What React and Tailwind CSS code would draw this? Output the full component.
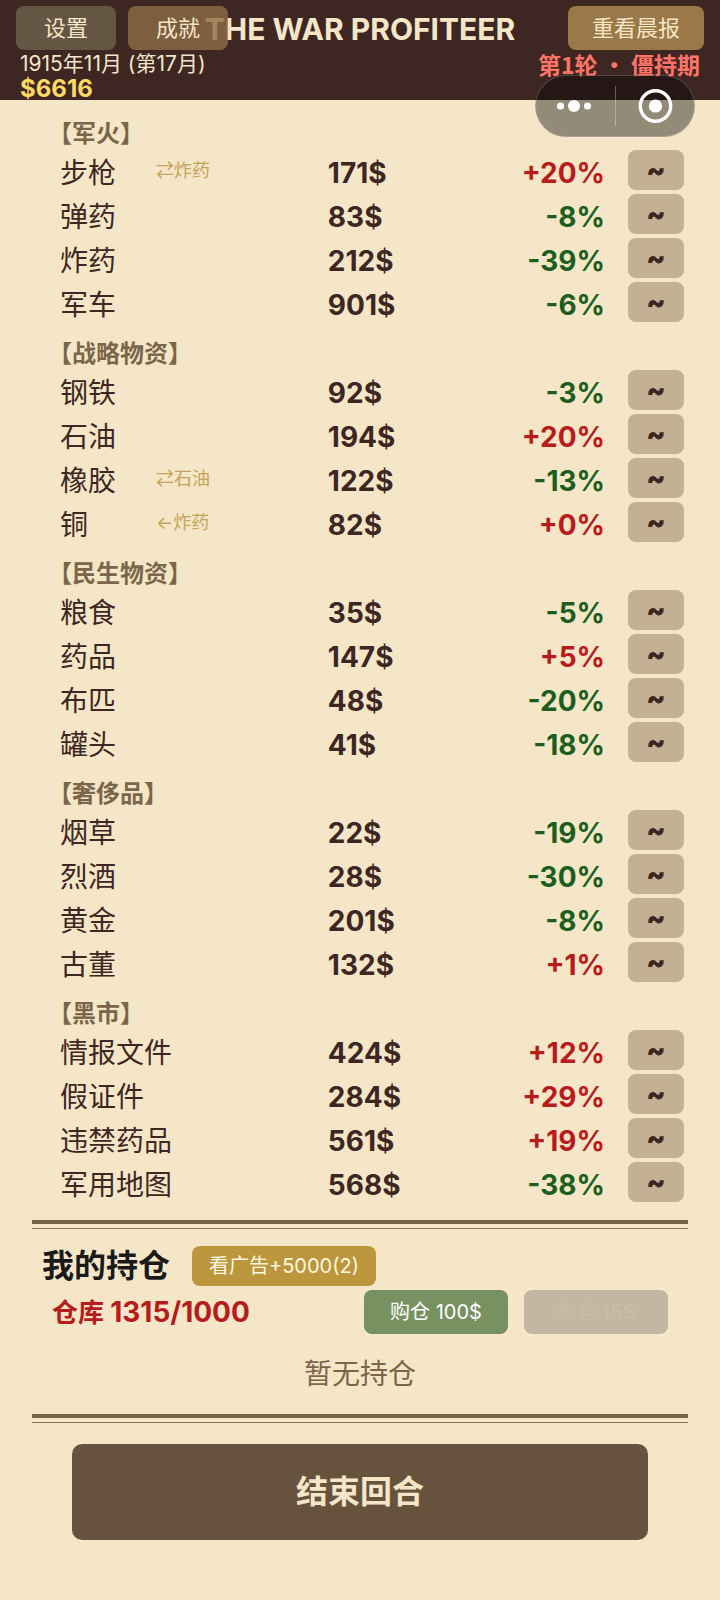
import { useState } from 'react';
import clsx from 'clsx';

const GROUPS = [
  {
    title: '军火',
    items: [
      { name: '步枪', link: '⇄炸药', price: 171, change: 20 },
      { name: '弹药', price: 83, change: -8 },
      { name: '炸药', price: 212, change: -39 },
      { name: '军车', price: 901, change: -6 },
    ],
  },
  {
    title: '战略物资',
    items: [
      { name: '钢铁', price: 92, change: -3 },
      { name: '石油', price: 194, change: 20 },
      { name: '橡胶', link: '⇄石油', price: 122, change: -13 },
      { name: '铜', link: '←炸药', price: 82, change: 0 },
    ],
  },
  {
    title: '民生物资',
    items: [
      { name: '粮食', price: 35, change: -5 },
      { name: '药品', price: 147, change: 5 },
      { name: '布匹', price: 48, change: -20 },
      { name: '罐头', price: 41, change: -18 },
    ],
  },
  {
    title: '奢侈品',
    items: [
      { name: '烟草', price: 22, change: -19 },
      { name: '烈酒', price: 28, change: -30 },
      { name: '黄金', price: 201, change: -8 },
      { name: '古董', price: 132, change: 1 },
    ],
  },
  {
    title: '黑市',
    items: [
      { name: '情报文件', price: 424, change: 12 },
      { name: '假证件', price: 284, change: 29 },
      { name: '违禁药品', price: 561, change: 19 },
      { name: '军用地图', price: 568, change: -38 },
    ],
  },
];

const HeaderButton = ({ className, children }) => (
  <button
    type="button"
    className={clsx('h-11 rounded-lg text-[22px] leading-7 text-[#f5e6c8]', className)}
  >
    {children}
  </button>
);

const Header = () => (
  <header className="relative bg-[#3e2723] pt-2">
    <h1 className="text-center text-[30px] leading-[42px] font-bold text-[#f5e6c8]">THE WAR PROFITEER</h1>
    <div className="flex justify-between px-5 leading-7">
      <p className="text-[21px] text-[#f5e6c8]">1915年11月 (第17月)</p>
      <p className="font-['Noto_Sans_CJK_SC',sans-serif] text-[23px] leading-7 font-bold text-[#ff7466]">
        第1轮 · 僵持期
      </p>
    </div>
    <p className="pl-5 text-2xl leading-[22px] font-bold text-[#ffd966]">$6616</p>

    <nav className="absolute inset-x-4 top-1.5 flex gap-3">
      <HeaderButton className="w-25 bg-[#6e634b]/80">设置</HeaderButton>
      <HeaderButton className="w-25 bg-[#8d6e47]/80">成就</HeaderButton>
      <HeaderButton className="ml-auto w-34 bg-[#9b7847]">重看晨报</HeaderButton>
    </nav>
  </header>
);

// Floating menu / close control supplied by the host app
const Capsule = () => (
  <div className="absolute top-[75px] right-[25px] flex h-[62px] w-40 items-center rounded-full border border-white/20 bg-black/40">
    <button type="button" aria-label="更多" className="flex h-full flex-1 items-center justify-center">
      <svg width="36" height="14" viewBox="0 0 36 14" fill="#fff">
        <circle cx="3.5" cy="7" r="3.6" />
        <circle cx="17" cy="7" r="6" />
        <circle cx="30.5" cy="7" r="3.6" />
      </svg>
    </button>
    <span className="h-10 w-px bg-white/30" />
    <button type="button" aria-label="关闭" className="flex h-full flex-1 items-center justify-center">
      <svg width="36" height="36" viewBox="0 0 36 36">
        <circle cx="18.5" cy="18" r="15.2" fill="none" stroke="#fff" strokeWidth="3.4" />
        <circle cx="18.5" cy="18" r="6.6" fill="#fff" />
      </svg>
    </button>
  </div>
);

const GoodsRow = ({ item }) => (
  <tr className="h-11">
    <th scope="row" className="p-0 pt-0.5 pl-3 text-left font-normal">
      <div className="flex items-center whitespace-nowrap">
        <span className="min-w-24 text-[28px] leading-10">{item.name}</span>
        {item.link && <span className="pb-1 text-lg leading-6 text-[#c4a35a]">{item.link}</span>}
      </div>
    </th>
    <td className="p-0 pt-0.5 text-[28px] leading-10 font-bold">{item.price}$</td>
    <td
      className={clsx(
        'p-0 pt-0.5 text-right text-[28px] leading-10 font-bold',
        item.change < 0 ? 'text-[#1b5e20]' : 'text-[#b71c1c]'
      )}
    >
      {item.change < 0 ? item.change : `+${item.change}`}%
    </td>
    <td className="p-0 pb-1">
      <button
        type="button"
        aria-label={`${item.name}走势`}
        className="ml-auto block h-10 w-14 rounded-lg bg-[#c4b194] text-[28px] leading-9 font-black"
      >
        ~
      </button>
    </td>
  </tr>
);

const Market = () => (
  <section className="pt-1.5 pr-9 pl-12">
    <table className="w-full table-fixed border-collapse text-[#3e2723]">
      <colgroup>
        <col className="w-[44%]" />
        <col className="w-[20%]" />
        <col />
        <col className="w-[79px]" />
      </colgroup>
      {GROUPS.map((group) => (
        <tbody key={group.title}>
          <tr className="h-11">
            <th
              scope="rowgroup"
              colSpan={4}
              className="p-0 pt-3 text-left text-2xl leading-8 font-bold text-[#7b664a]"
            >
              【{group.title}】
            </th>
          </tr>
          {group.items.map((item) => (
            <GoodsRow key={item.name} item={item} />
          ))}
        </tbody>
      ))}
    </table>
  </section>
);

const Divider = () => (
  <div className="mx-8 h-[9px] border-t-4 border-b border-t-[#776447] border-b-[#8b7355]" />
);

const Holdings = () => {
  const [adsLeft] = useState(2);

  return (
    <section className="pt-[17px]">
      <div className="flex items-center gap-[22px] pl-[42px]">
        <h2 className="text-[32px] leading-10 font-bold text-[#1a1a1a]">我的持仓</h2>
        <button type="button" className="h-10 w-46 rounded-lg bg-[#bc963c] text-xl leading-7 text-[#fff8e1]">
          看广告+5000({adsLeft})
        </button>
      </div>
      <div className="mt-1 flex items-center gap-4 pr-13 pl-[52px]">
        <p className="mr-auto text-[26px] leading-10 font-bold text-[#b71c1c]">
          仓库 <span className="text-[28px]">1315/1000</span>
        </p>
        <button type="button" className="h-11 w-36 rounded-lg bg-[#789161] text-xl leading-7 text-white">
          购仓 100$
        </button>
        <button
          type="button"
          disabled
          className="h-11 w-36 rounded-lg bg-[#c2b8a2] text-xl leading-7 text-[#c9bda6]"
        >
          卖仓 15$
        </button>
      </div>
      <p className="mt-5 mb-5 text-center text-[28px] leading-10 text-[#7b664a]">暂无持仓</p>
    </section>
  );
};

export default function App() {
  return (
    <div className="relative min-h-screen bg-[#f5e6c8] pb-15 font-['Inter','Noto_Sans_CJK_SC',sans-serif]">
      <Header />
      <Capsule />
      <main>
        <Market />
        <div className="pt-3.5">
          <Divider />
        </div>
        <Holdings />
        <Divider />
        <div className="px-18 pt-[21px]">
          <button
            type="button"
            className="h-24 w-full rounded-[10px] bg-[#67523d] text-[32px] leading-10 font-bold text-[#f5e6c8]"
          >
            结束回合
          </button>
        </div>
      </main>
    </div>
  );
}
